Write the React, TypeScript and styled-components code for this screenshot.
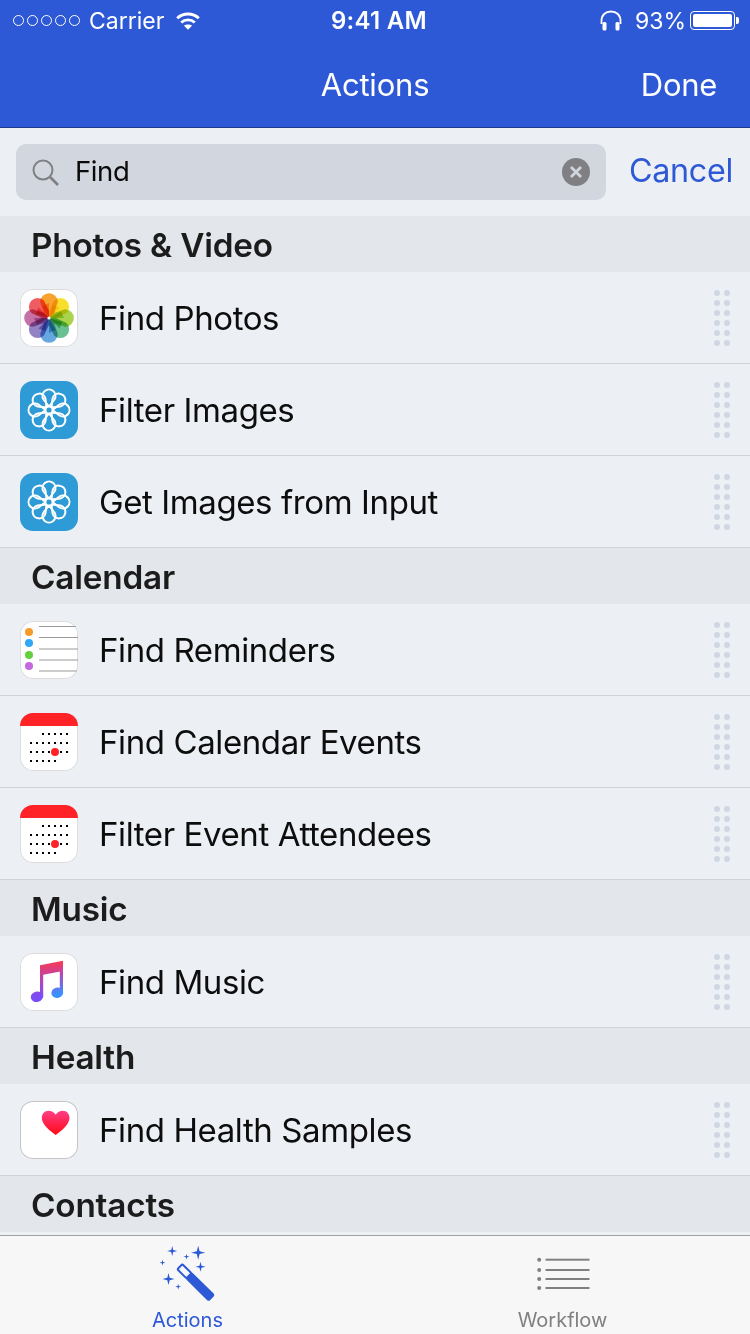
import React from "react";
import styled, { createGlobalStyle } from "styled-components";

const Global = createGlobalStyle`
  html, body { margin: 0; padding: 0; background: #eceff4; }
  body { font-family: Inter, "Liberation Sans", sans-serif; }
`;

const Page = styled.div`
  width: 750px; height: 1334px; display: flex; flex-direction: column; overflow: hidden;
`;
const Header = styled.header`
  background: #2d58d6; color: #fff; height: 128px; box-sizing: border-box;
  border-bottom: 1px solid #1f3a8c; flex: none;
`;
const StatusBar = styled.div`
  height: 41px; display: grid; grid-template-columns: 1fr auto 1fr; align-items: center; padding: 0 15px 0 13px;
`;
const StatusLeft = styled.div`display: flex; align-items: center;`;
const StatusRight = styled.div`display: flex; align-items: center; justify-content: flex-end;`;
const Signal = styled.div`display: flex; gap: 3px; margin-right: 9px;`;
const SignalDot = styled.span`
  width: 11px; height: 11px; box-sizing: border-box; border: 1px solid #fff; border-radius: 50%;
`;
const StatusText = styled.span`font-size: 23px; line-height: 40px;`;
const Clock = styled.span`font-size: 24px; font-weight: 600; line-height: 40px; letter-spacing: 0.3px; margin-left: 10px;`;
const Battery = styled.div`
  width: 45px; height: 19px; box-sizing: border-box; border: 1px solid #fff; border-radius: 4px; padding: 2px;
  margin-left: 4px; position: relative;
  &::after {
    content: ""; position: absolute; right: -5px; top: 5px; width: 3px; height: 7px; background: #fff; border-radius: 0 2px 2px 0;
  }
`;
const BatteryFill = styled.div`height: 100%; background: #fff; border-radius: 2px;`;
const NavBar = styled.nav`
  height: 86px; display: grid; grid-template-columns: 1fr auto 1fr; align-items: center; padding: 0 33px;
  box-sizing: border-box;
`;
const NavTitle = styled.div`font-size: 31px; letter-spacing: -0.2px; grid-column: 2;`;
const NavDone = styled.div`font-size: 31px; justify-self: end; grid-column: 3; letter-spacing: -0.3px;`;

const SearchArea = styled.div`
  height: 88px; flex: none; display: flex; align-items: center; background: #eceff4; padding: 0 17px 0 16px; box-sizing: border-box; gap: 23px;
`;
const SearchField = styled.div`
  flex: 1; height: 56px; border-radius: 10px; background: #d2d6df; display: flex; align-items: center; padding: 0 16px; gap: 16px;
`;
const SearchText = styled.span`flex: 1; font-size: 27.5px; color: #0a0a0a; letter-spacing: -0.4px; padding-bottom: 3px;`;
const Cancel = styled.span`font-size: 32.3px; color: #2d58d6; letter-spacing: -0.3px; padding-bottom: 3px;`;

const List = styled.div`flex: 1; min-height: 0; overflow: hidden;`;
const SectionHead = styled.div`
  height: 56px; box-sizing: border-box; background: #e3e6eb; padding: 2px 0 0 31px; display: flex; align-items: center;
  font-size: 33.3px; font-weight: 600; color: #1c1c1c; letter-spacing: -0.2px;
`;
const Row = styled.div`
  height: 92px; box-sizing: border-box; background: #eceff4; display: flex; align-items: center;
  padding: 1px 20px 0 20px; gap: 21px; border-bottom: 1px solid #d0d2d6;
`;
const RowTitle = styled.span`flex: 1; font-size: 33px; color: #0d0d0d; letter-spacing: -0.4px;`;
const IconBox = styled.div<{ $bg?: string; $line?: string }>`
  width: 58px; height: 58px; border-radius: 13px; overflow: hidden; flex: none; box-sizing: border-box; position: relative;
  background: ${p => p.$bg ?? "#fff"};
  ${p => p.$line ? `box-shadow: inset 0 0 0 1px ${p.$line};` : ""}
  svg { display: block; }
`;
const Handle = styled.div`display: grid; grid-template-columns: 6px 6px; gap: 4px; grid-auto-rows: 6px;`;
const HandleDot = styled.span`border-radius: 50%; background: #d0d7e3; width: 6px; height: 6px;`;

const TabBar = styled.footer`
  height: 99px; flex: none; box-sizing: border-box; background: #f7f7f7; border-top: 1px solid #a3a3a3;
  display: grid; grid-template-columns: 1fr 1fr;
`;
const Tab = styled.div<{ $on?: boolean }>`
  display: flex; flex-direction: column; align-items: center; padding-top: 5px; color: ${p => p.$on ? "#2d58d6" : "#808080"};
  svg { display: block; }
`;
const TabLabel = styled.span`font-size: 20px; line-height: 24px; margin-top: 5px;`;

const PhotosIcon = () => {
  const cols = ["#f79a1e", "#f7dc1a", "#a4cf3c", "#5cbb8a", "#5a9fdc", "#8a78c0", "#c065a0", "#ee4f55"];
  return (
    <svg width="58" height="58" viewBox="0 0 58 58">
      <g style={{ isolation: "isolate" }}>
        {cols.map((c, i) => (
          <g key={i} transform={`rotate(${i * 45} 29 29)`} style={{ mixBlendMode: "multiply" }}>
            <path d="M29 29 L24 24 L20.2 13 A8.8 8.8 0 0 1 37.8 13 L34 24 Z" fill={c} opacity="0.92" />
            <path d="M29 29 L22.5 17 L29 14 Z" fill={c} opacity="0.75" style={{ mixBlendMode: "multiply" }} />
          </g>
        ))}
      </g>
      <circle cx="29" cy="29" r="1.6" fill="#fff" />
    </svg>
  );
};
const FilterIcon = () => (
  <svg width="58" height="58" viewBox="0 0 58 58">
    {[0, 1, 2, 3, 4, 5, 6, 7].map(i => (
      <path key={i} d="M29 25.5 L23.5 18.5 A6.5 6.5 0 1 1 34.5 18.5 Z" fill="none" stroke="#fff" strokeWidth="2" strokeLinejoin="round"
        transform={`rotate(${i * 45} 29 29)`} />
    ))}
    <circle cx="29" cy="29" r="3.4" fill="#2e9bd6" stroke="#fff" strokeWidth="1.6" />
  </svg>
);
const RemindersIcon = () => (
  <svg width="58" height="58" viewBox="0 0 58 58">
    {[5.5, 16.5, 28, 39, 50].map(y => <rect key={y} x="19" y={y - 0.5} width="39" height="1" fill="#9a9a9a" />)}
    {[[11, "#f89a2a"], [22, "#30a8f5"], [34, "#62d03f"], [45, "#c46ade"]].map(([y, c]) => (
      <circle key={String(y)} cx="9" cy={y as number} r="4" fill={c as string} />
    ))}
  </svg>
);
const CalendarIcon = () => {
  const rows: [number, number[]][] = [
    [21, [2, 3, 4, 5, 6]],
    [30, [0, 1, 2, 3, 4, 5, 6]],
    [39, [0, 1, 2, 3, 5, 6]],
    [48, [0, 1, 2, 3, 4]],
  ];
  return (
    <svg width="58" height="58" viewBox="0 0 58 58">
      <rect width="58" height="13" fill="#ff2328" />
      {rows.map(([y, cs]) => cs.map(c => <rect key={`${y}-${c}`} x={10 + c * 6} y={y - 1} width="2" height="2" fill="#000" />))}
      <circle cx="35" cy="39" r="4" fill="#ff2328" />
    </svg>
  );
};
const MusicIcon = () => (
  <svg width="58" height="58" viewBox="0 0 58 58">
    <defs>
      <linearGradient id="ml" x1="0" y1="8" x2="0" y2="44" gradientUnits="userSpaceOnUse">
        <stop offset="0" stopColor="#f93a52" />
        <stop offset="0.5" stopColor="#b844b0" />
        <stop offset="1" stopColor="#7a4cf5" />
      </linearGradient>
      <linearGradient id="mr" x1="0" y1="8" x2="0" y2="41" gradientUnits="userSpaceOnUse">
        <stop offset="0" stopColor="#f93a52" />
        <stop offset="0.4" stopColor="#b04ab8" />
        <stop offset="1" stopColor="#3a90ff" />
      </linearGradient>
    </defs>
    <path d="M20 12.2 L43 7.7 V18 L23.2 21.8 V43.7 H20 Z" fill="url(#ml)" />
    <path d="M39.8 14 H43 V39.7 H39.8 Z" fill="url(#mr)" />
    <ellipse cx="17" cy="43.7" rx="6.3" ry="5.2" transform="rotate(-15 17 43.7)" fill="url(#ml)" />
    <ellipse cx="37.3" cy="39.7" rx="6" ry="5.2" transform="rotate(-15 37.3 39.7)" fill="url(#mr)" />
  </svg>
);
const HeartIcon = () => (
  <svg width="58" height="58" viewBox="0 0 58 58">
    <defs>
      <linearGradient id="hg" x1="0" y1="0" x2="0" y2="1">
        <stop offset="0" stopColor="#ff3d87" />
        <stop offset="1" stopColor="#ff0a14" />
      </linearGradient>
    </defs>
    <path d="M35.7 34 C31 30.5 21.8 24 21.8 17 C21.8 12.5 25 9.7 28.5 9.7 C31.5 9.7 34 11.2 35.7 13.8 C37.4 11.2 39.9 9.7 42.9 9.7 C46.4 9.7 49.5 12.5 49.5 17 C49.5 24 40.4 30.5 35.7 34 Z" fill="url(#hg)" />
  </svg>
);

const star = (x: number, y: number, r: number) => {
  const k = r * 0.2;
  return `M${x} ${y - r}L${x + k} ${y - k}L${x + r} ${y}L${x + k} ${y + k}L${x} ${y + r}L${x - k} ${y + k}L${x - r} ${y}L${x - k} ${y - k}Z`;
};
const WandIcon = () => (
  <svg width="64" height="62" viewBox="0 0 64 62" fill="#2d58d6">
    <path d={[star(42.2, 11.7, 7), star(16.2, 10, 5), star(30.5, 15.7, 3), star(6.5, 21.7, 3), star(44.5, 25.7, 5), star(12.5, 38, 6), star(22.2, 45.7, 3)].join("")} />
    <g transform="translate(23.8 25.7) rotate(44.6)">
      <rect x="0" y="-3.6" width="13" height="7.2" rx="1.5" fill="none" stroke="#2d58d6" strokeWidth="2" />
      <rect x="12" y="-4.6" width="33" height="9.2" rx="2" />
    </g>
  </svg>
);
const ListIcon = () => (
  <svg width="56" height="62" viewBox="0 0 56 62" fill="#808080">
    {[18.7, 29, 38, 47].map(y => (
      <g key={y}>
        <circle cx="4.2" cy={y} r="2" />
        <rect x="10.5" y={y - 1} width="44" height="2" />
      </g>
    ))}
  </svg>
);

type Item = { title: string; icon: React.ReactNode; bg?: string; line?: string };
type Section = { name: string; items: Item[] };

const sections: Section[] = [
  { name: "Photos & Video", items: [
    { title: "Find Photos", icon: <PhotosIcon />, line: "#dcdcdc" },
    { title: "Filter Images", icon: <FilterIcon />, bg: "#2e9bd6" },
    { title: "Get Images from Input", icon: <FilterIcon />, bg: "#2e9bd6" },
  ] },
  { name: "Calendar", items: [
    { title: "Find Reminders", icon: <RemindersIcon />, line: "#dcdcdc" },
    { title: "Find Calendar Events", icon: <CalendarIcon />, line: "#dcdcdc" },
    { title: "Filter Event Attendees", icon: <CalendarIcon />, line: "#dcdcdc" },
  ] },
  { name: "Music", items: [{ title: "Find Music", icon: <MusicIcon />, line: "#dcdcdc" }] },
  { name: "Health", items: [{ title: "Find Health Samples", icon: <HeartIcon />, line: "#c4c4c4" }] },
  { name: "Contacts", items: [] },
];

export default function App() {
  return (
    <Page>
      <Global />
      <Header>
        <StatusBar>
          <StatusLeft>
            <Signal>{[0, 1, 2, 3, 4].map(i => <SignalDot key={i} />)}</Signal>
            <StatusText>Carrier</StatusText>
            <svg width="24" height="18" viewBox="0 0 24 18" style={{ marginLeft: 12 }} fill="none" stroke="#fff" strokeWidth="2.8">
              <path d="M1.2 6.2 C7 0.6 17 0.6 22.8 6.2" />
              <path d="M5.2 10.6 C9 7 15 7 18.8 10.6" />
              <path d="M12 17.8 L7.8 13.6 C10 12 14 12 16.2 13.6 Z" fill="#fff" stroke="none" />
            </svg>
          </StatusLeft>
          <Clock>9:41 AM</Clock>
          <StatusRight>
            <svg width="24" height="21" viewBox="0 0 24 21" style={{ marginRight: 12 }}>
              <path d="M2.5 14 V11 C2.5 5 6.5 1.5 12 1.5 C17.5 1.5 21.5 5 21.5 11 V14" fill="none" stroke="#fff" strokeWidth="1.8" />
              <rect x="3.5" y="12" width="4" height="8.5" rx="1.5" fill="#fff" />
              <rect x="16.5" y="12" width="4" height="8.5" rx="1.5" fill="#fff" />
            </svg>
            <StatusText>93%</StatusText>
            <Battery><BatteryFill /></Battery>
          </StatusRight>
        </StatusBar>
        <NavBar>
          <NavTitle>Actions</NavTitle>
          <NavDone>Done</NavDone>
        </NavBar>
      </Header>
      <SearchArea>
        <SearchField>
          <svg width="27" height="27" viewBox="0 0 27 27" fill="none" stroke="#808084">
            <circle cx="11" cy="11" r="9.5" strokeWidth="2" />
            <path d="M18 18 L26 26" strokeWidth="2.6" />
          </svg>
          <SearchText>Find</SearchText>
          <svg width="28" height="28" viewBox="0 0 28 28">
            <circle cx="14" cy="14" r="14" fill="#808084" />
            <path d="M9 9 L19 19 M19 9 L9 19" stroke="#d2d6df" strokeWidth="2.8" />
          </svg>
        </SearchField>
        <Cancel>Cancel</Cancel>
      </SearchArea>
      <List>
        {sections.map(s => (
          <section key={s.name}>
            <SectionHead>{s.name}</SectionHead>
            {s.items.map(it => (
              <Row key={it.title}>
                <IconBox $bg={it.bg} $line={it.line}>{it.icon}</IconBox>
                <RowTitle>{it.title}</RowTitle>
                <Handle>{Array.from({ length: 12 }, (_, i) => <HandleDot key={i} />)}</Handle>
              </Row>
            ))}
          </section>
        ))}
      </List>
      <TabBar>
        <Tab $on>
          <WandIcon />
          <TabLabel>Actions</TabLabel>
        </Tab>
        <Tab>
          <ListIcon />
          <TabLabel>Workflow</TabLabel>
        </Tab>
      </TabBar>
    </Page>
  );
}
